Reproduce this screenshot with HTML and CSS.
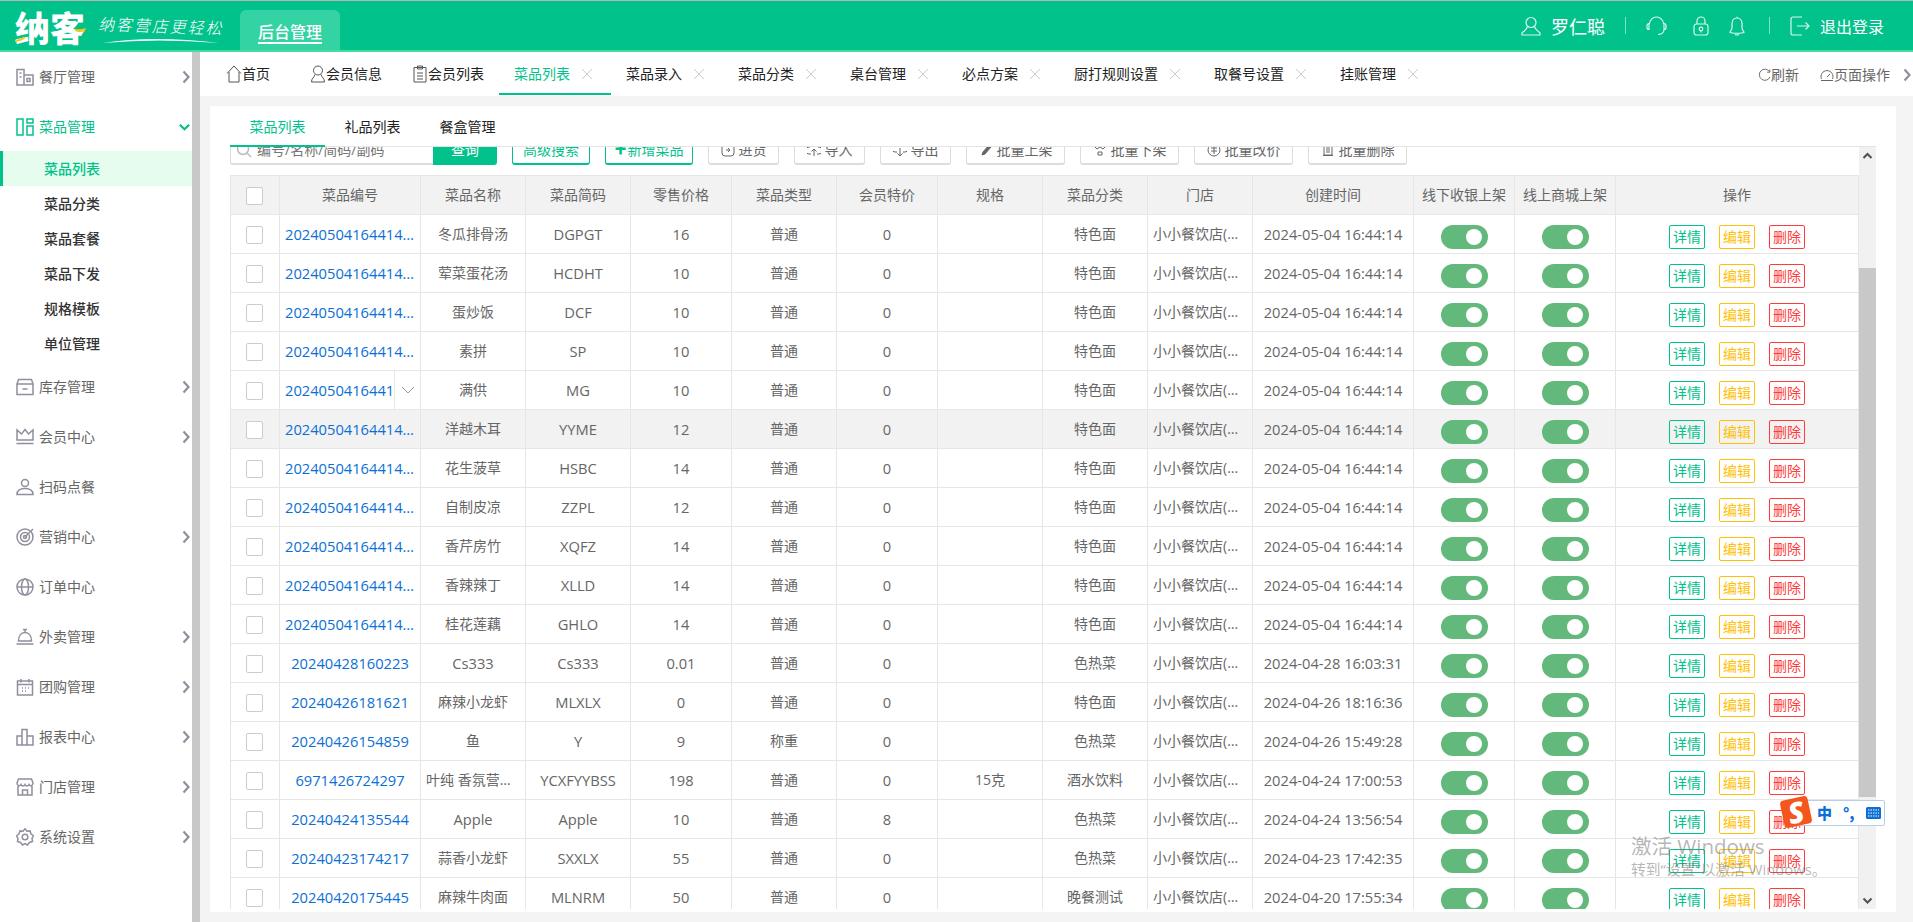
FILE: index.html
```html
<!DOCTYPE html>
<html lang="zh-CN">
<head>
<meta charset="utf-8">
<title>菜品列表</title>
<link rel="stylesheet" href="styles.css">
</head>
<body>
<svg class="defs" width="0" height="0">
  <symbol id="x" viewBox="0 0 12 12"><path d="M1 1l10 10M11 1L1 11" fill="none" stroke="currentColor" stroke-width="1"/></symbol>
  <symbol id="chev" viewBox="0 0 8 14"><path d="M1.500 1.500L6.500 7l-5 5.500" fill="none" stroke="currentColor" stroke-width="2.200"/></symbol>
</svg>
<header class="topbar">
  <div class="logo">纳客<svg class="logo-acc" viewBox="0 0 71 30"><path d="M0 26q5-.5 9-3.500l1 2q-4 3-10 3.500zM60 15q5 1 11-1l-1 3q-5 2-10 0z" fill="#f5c518"/></svg></div>
  <div class="slogan"><span>纳客营店更轻松</span><svg class="swoosh" viewBox="0 0 116 7"><path d="M0 6Q50-2 116 6Q55 1 0 6z" fill="#fff"/></svg></div>
  <div class="backend"><span>后台管理</span></div>
  <div class="top-right">
    <svg class="ti ti-user" viewBox="0 0 20 20"><circle cx="10" cy="6.500" r="5"/><path d="M6.500 10.500C5.500 14 3 15 1 17v2h18v-2c-2-2-4.500-3-5.500-6.500"/></svg>
    <span class="uname">罗仁聪</span>
    <i class="vsep vsep-a"></i>
    <svg class="ti ti-head" viewBox="0 0 21 20"><path d="M3.500 8a7 7 0 0 1 14 0M3 7.500h0a2 2 0 0 0-2 2v2a2 2 0 0 0 2 2zM18 7.500h0a2 2 0 0 1 2 2v2a2 2 0 0 1-2 2zM18 13.500c0 3-2.500 5-6 5"/></svg>
    <svg class="ti ti-lock" viewBox="0 0 16 20"><rect x="1" y="8" width="14" height="11" rx="2.500"/><path d="M4 8V5a4 4 0 0 1 8 0v3"/><circle cx="8" cy="13" r="1.800"/><path d="M8 15v1.500"/></svg>
    <svg class="ti ti-bell" viewBox="0 0 16 20"><path d="M8 2C4.500 2 3 5 3 8v4c0 2-2 3-2 4.500 2 1 12 1 14 0C15 15 13 14 13 12V8c0-3-1.500-6-5-6zM8 2V.8M6 18.500q2 1 4 0"/></svg>
    <i class="vsep vsep-b"></i>
    <svg class="ti ti-out" viewBox="0 0 20 20"><path d="M12 1H3a2 2 0 0 0-2 2v14a2 2 0 0 0 2 2h9M7 10h12M15.500 6.500L19 10l-3.500 3.500"/></svg>
    <span class="logout">退出登录</span>
  </div>
</header>
<div class="shell">
  <nav class="side">
    <div class="nav-item"><svg class="ni" viewBox="0 0 18 18"><path d="M1 17V1.500h7V17zM8 7h9v10H8zM3.500 5h2M3.500 9h2M11 10.500h3v3h-3z"/></svg><span>餐厅管理</span><svg class="nc"><use href="#chev"/></svg></div>
    <div class="nav-item on"><svg class="ni" viewBox="0 0 18 18"><path d="M1 1h6v16H1zM11 1h6v4h-6zM11 8h6v9h-6z"/></svg><span>菜品管理</span><svg class="nc-down" viewBox="0 0 12 8"><path d="M1 1.500l5 5 5-5" fill="none" stroke="currentColor" stroke-width="2.400"/></svg></div>
    <div class="sub">
      <div class="sub-item on">菜品列表</div>
      <div class="sub-item">菜品分类</div>
      <div class="sub-item">菜品套餐</div>
      <div class="sub-item">菜品下发</div>
      <div class="sub-item">规格模板</div>
      <div class="sub-item">单位管理</div>
    </div>
    <div class="nav-item"><svg class="ni" viewBox="0 0 18 18"><path d="M1 6h16v10.500H1zM2.500 1.500h13L17 6H1zM6.500 11h5"/></svg><span>库存管理</span><svg class="nc"><use href="#chev"/></svg></div>
    <div class="nav-item"><svg class="ni" viewBox="0 0 18 18"><path d="M1 2v10h16V2l-4.500 4L9 1.500 5.500 6zM.5 15.500h17"/></svg><span>会员中心</span><svg class="nc"><use href="#chev"/></svg></div>
    <div class="nav-item"><svg class="ni" viewBox="0 0 18 18"><circle cx="9" cy="5" r="3.500"/><path d="M1 16.500c0-4 3-6 8-6s8 2 8 6zM1 16.500h16"/></svg><span>扫码点餐</span></div>
    <div class="nav-item"><svg class="ni" viewBox="0 0 18 18"><circle cx="9" cy="9" r="8"/><circle cx="9" cy="9" r="4.500"/><circle cx="9" cy="9" r="1.500"/><path d="M9 9l8-8"/></svg><span>营销中心</span><svg class="nc"><use href="#chev"/></svg></div>
    <div class="nav-item"><svg class="ni" viewBox="0 0 18 18"><circle cx="9" cy="9" r="8"/><ellipse cx="9" cy="9" rx="3.500" ry="8"/><path d="M1 9h16"/></svg><span>订单中心</span></div>
    <div class="nav-item"><svg class="ni" viewBox="0 0 18 18"><path d="M9 4.500C5 4.500 2.500 8 2.500 13h13C15.500 8 13 4.500 9 4.500zM7 1.500h4M9 1.500v3M.5 16h17"/></svg><span>外卖管理</span><svg class="nc"><use href="#chev"/></svg></div>
    <div class="nav-item"><svg class="ni" viewBox="0 0 18 18"><path d="M1.500 3h15v14h-15zM5 1v3.500M13 1v3.500M1.500 6.500h15M6 10h1M9 10h1M12 10h1M6 13h1M9 13h1"/></svg><span>团购管理</span><svg class="nc"><use href="#chev"/></svg></div>
    <div class="nav-item"><svg class="ni" viewBox="0 0 18 18"><path d="M1 8h5v9H1zM6 1.500h5V17H6zM11 8h6v9h-6z"/></svg><span>报表中心</span><svg class="nc"><use href="#chev"/></svg></div>
    <div class="nav-item"><svg class="ni" viewBox="0 0 18 18"><path d="M2 8v9h14V8M1 5l1.500-4h13L17 5c0 3-3 3.500-4 1.500C12 8.500 10 8.500 9 6.500 8 8.500 6 8.500 5 6.500 4 8.500 1 8 1 5zM6.500 17v-5h5v5"/></svg><span>门店管理</span><svg class="nc"><use href="#chev"/></svg></div>
    <div class="nav-item"><svg class="ni" viewBox="0 0 18 18"><path d="M9 .8l2 2.400 3-.3 1 3 2.500 2.100L16 10.500l.5 3-3 1L11.500 17 9 15.500 6.500 17l-2-2.500-3-1 .5-3L.5 8l2.500-2.100 1-3 3 .3z"/><circle cx="9" cy="9" r="2.800"/></svg><span>系统设置</span><svg class="nc"><use href="#chev"/></svg></div>
  </nav>
  <div class="side-bar"></div>
  <main class="main">
    <div class="tabs">
      <div class="tab tab-home"><svg class="tab-ic" viewBox="0 0 16 18"><path d="M1 8.500L8 1l7 7.500M3 7v10h10V7"/></svg>首页</div>
      <div class="tab"><svg class="tab-ic" viewBox="0 0 16 18"><circle cx="8" cy="5.500" r="4.500"/><path d="M5 9.500C4 13 1.500 13 1.500 17h13C14.500 13 12 13 11 9.500"/></svg>会员信息</div>
      <div class="tab"><svg class="tab-ic" viewBox="0 0 16 18"><path d="M2 2.500h12V17H2zM5.500 1h5v3h-5zM5 8h6M5 11h6M5 14h6"/></svg>会员列表</div>
      <div class="tab on">菜品列表<svg class="tab-x"><use href="#x"/></svg></div>
      <div class="tab">菜品录入<svg class="tab-x"><use href="#x"/></svg></div>
      <div class="tab">菜品分类<svg class="tab-x"><use href="#x"/></svg></div>
      <div class="tab">桌台管理<svg class="tab-x"><use href="#x"/></svg></div>
      <div class="tab">必点方案<svg class="tab-x"><use href="#x"/></svg></div>
      <div class="tab">厨打规则设置<svg class="tab-x"><use href="#x"/></svg></div>
      <div class="tab">取餐号设置<svg class="tab-x"><use href="#x"/></svg></div>
      <div class="tab">挂账管理<svg class="tab-x"><use href="#x"/></svg></div>
      <div class="tab-tools">
        <svg class="tool-ic" viewBox="0 0 14 14"><path d="M12.500 3.500A6 6 0 1 0 13 9M12.800 1v3h-3"/></svg><span class="tool-t">刷新</span>
        <svg class="tool-ic tool-ic2" viewBox="0 0 14 14"><path d="M1.500 11A6 6 0 1 1 12.500 11M7 9l3-3M1 12.500h12"/></svg><span>页面操作</span>
        <svg class="tool-chev"><use href="#chev"/></svg>
      </div>
    </div>
    <section class="panel">
      <div class="subtabs">
        <div class="subtab on">菜品列表</div>
        <div class="subtab">礼品列表</div>
        <div class="subtab">餐盒管理</div>
      </div>
      <div class="body">
        <div class="scroller">
          <div class="toolbar">
            <div class="search"><svg class="s-ic" viewBox="0 0 16 16"><circle cx="7" cy="7" r="5.500"/><path d="M11 11l4 4"/></svg><span>编号/名称/简码/副码</span></div>
            <div class="query">查询</div>
            <div class="btn green w78">高级搜索</div>
            <div class="btn green w89"><b class="plus">✚</b>新增菜品</div>
            <div class="btn w71"><svg class="b-ic" viewBox="0 0 14 14"><path d="M1 1v9a3 3 0 0 0 3 3h6a3 3 0 0 0 3-3V1M5 7h4M7 5l2 2-2 2"/></svg>进货</div>
            <div class="btn w71"><svg class="b-ic" viewBox="0 0 14 14"><path d="M4 11H2a1.500 1.500 0 0 1 0-7h1a4 4 0 0 1 8 0h1a1.500 1.500 0 0 1 0 7h-2M7 13V6M4.500 8.500L7 6l2.500 2.500"/></svg>导入</div>
            <div class="btn w71"><svg class="b-ic" viewBox="0 0 14 14"><path d="M4 9H2a1.500 1.500 0 0 1 0-7h10a1.500 1.500 0 0 1 0 7h-2M7 5v8M4.500 10.500L7 13l2.500-2.500"/></svg>导出</div>
            <div class="btn w99"><svg class="b-ic" viewBox="0 0 14 14"><path d="M3 12l1-3 6-7 2 2-6 7z" fill="#666"/></svg>批量上架</div>
            <div class="btn w99"><svg class="b-ic" viewBox="0 0 14 14"><path d="M1 3l3 3 3-2 3 2 3-3M5 9h4v3H5z"/></svg>批量下架</div>
            <div class="btn w99"><svg class="b-ic" viewBox="0 0 14 14"><circle cx="7" cy="7" r="6"/><path d="M4 5h6M4 8h6M7 3v8"/></svg>批量改价</div>
            <div class="btn w99"><svg class="b-ic" viewBox="0 0 14 14"><path d="M3 2v10h8V2M2 12.500h10M6 3v7M8 3v7"/></svg>批量删除</div>
          </div>
          <table class="grid">
            <colgroup><col class="c1"><col class="c2"><col class="c3"><col class="c3"><col class="c4"><col class="c3"><col class="c4"><col class="c3"><col class="c3"><col class="c3"><col class="c5"><col class="c4"><col class="c4"><col class="c6"></colgroup>
            <thead><tr><th><span class="ck"></span></th><th>菜品编号</th><th>菜品名称</th><th>菜品简码</th><th>零售价格</th><th>菜品类型</th><th>会员特价</th><th>规格</th><th>菜品分类</th><th>门店</th><th>创建时间</th><th>线下收银上架</th><th>线上商城上架</th><th>操作</th></tr></thead>
            <tbody>
<tr><td><span class="ck"></span></td><td class="n id">2024050416441401</td><td>冬瓜排骨汤</td><td class="n">DGPGT</td><td class="n">16</td><td>普通</td><td class="n">0</td><td></td><td>特色面</td><td class="st">小小餐饮店(小小餐饮店)</td><td class="n">2024-05-04 16:44:14</td><td><span class="sw"></span></td><td><span class="sw"></span></td><td><div class="ops"><span class="op g">详情</span><span class="op y">编辑</span><span class="op r">删除</span></div></td></tr>
<tr><td><span class="ck"></span></td><td class="n id">2024050416441402</td><td>荤菜蛋花汤</td><td class="n">HCDHT</td><td class="n">10</td><td>普通</td><td class="n">0</td><td></td><td>特色面</td><td class="st">小小餐饮店(小小餐饮店)</td><td class="n">2024-05-04 16:44:14</td><td><span class="sw"></span></td><td><span class="sw"></span></td><td><div class="ops"><span class="op g">详情</span><span class="op y">编辑</span><span class="op r">删除</span></div></td></tr>
<tr><td><span class="ck"></span></td><td class="n id">2024050416441403</td><td>蛋炒饭</td><td class="n">DCF</td><td class="n">10</td><td>普通</td><td class="n">0</td><td></td><td>特色面</td><td class="st">小小餐饮店(小小餐饮店)</td><td class="n">2024-05-04 16:44:14</td><td><span class="sw"></span></td><td><span class="sw"></span></td><td><div class="ops"><span class="op g">详情</span><span class="op y">编辑</span><span class="op r">删除</span></div></td></tr>
<tr><td><span class="ck"></span></td><td class="n id">2024050416441404</td><td>素拼</td><td class="n">SP</td><td class="n">10</td><td>普通</td><td class="n">0</td><td></td><td>特色面</td><td class="st">小小餐饮店(小小餐饮店)</td><td class="n">2024-05-04 16:44:14</td><td><span class="sw"></span></td><td><span class="sw"></span></td><td><div class="ops"><span class="op g">详情</span><span class="op y">编辑</span><span class="op r">删除</span></div></td></tr>
<tr><td><span class="ck"></span></td><td class="n idtip"><div class="idtip-in"><span class="idtip-t">2024050416441405</span><span class="idtip-c"><svg viewBox="0 0 14 8"><path d="M1 1l6 6 6-6" fill="none" stroke="#999" stroke-width="1"/></svg></span></div></td><td>满供</td><td class="n">MG</td><td class="n">10</td><td>普通</td><td class="n">0</td><td></td><td>特色面</td><td class="st">小小餐饮店(小小餐饮店)</td><td class="n">2024-05-04 16:44:14</td><td><span class="sw"></span></td><td><span class="sw"></span></td><td><div class="ops"><span class="op g">详情</span><span class="op y">编辑</span><span class="op r">删除</span></div></td></tr>
<tr class="hover"><td><span class="ck"></span></td><td class="n id">2024050416441406</td><td>洋越木耳</td><td class="n">YYME</td><td class="n">12</td><td>普通</td><td class="n">0</td><td></td><td>特色面</td><td class="st">小小餐饮店(小小餐饮店)</td><td class="n">2024-05-04 16:44:14</td><td><span class="sw"></span></td><td><span class="sw"></span></td><td><div class="ops"><span class="op g">详情</span><span class="op y">编辑</span><span class="op r">删除</span></div></td></tr>
<tr><td><span class="ck"></span></td><td class="n id">2024050416441407</td><td>花生菠草</td><td class="n">HSBC</td><td class="n">14</td><td>普通</td><td class="n">0</td><td></td><td>特色面</td><td class="st">小小餐饮店(小小餐饮店)</td><td class="n">2024-05-04 16:44:14</td><td><span class="sw"></span></td><td><span class="sw"></span></td><td><div class="ops"><span class="op g">详情</span><span class="op y">编辑</span><span class="op r">删除</span></div></td></tr>
<tr><td><span class="ck"></span></td><td class="n id">2024050416441408</td><td>自制皮凉</td><td class="n">ZZPL</td><td class="n">12</td><td>普通</td><td class="n">0</td><td></td><td>特色面</td><td class="st">小小餐饮店(小小餐饮店)</td><td class="n">2024-05-04 16:44:14</td><td><span class="sw"></span></td><td><span class="sw"></span></td><td><div class="ops"><span class="op g">详情</span><span class="op y">编辑</span><span class="op r">删除</span></div></td></tr>
<tr><td><span class="ck"></span></td><td class="n id">2024050416441409</td><td>香芹房竹</td><td class="n">XQFZ</td><td class="n">14</td><td>普通</td><td class="n">0</td><td></td><td>特色面</td><td class="st">小小餐饮店(小小餐饮店)</td><td class="n">2024-05-04 16:44:14</td><td><span class="sw"></span></td><td><span class="sw"></span></td><td><div class="ops"><span class="op g">详情</span><span class="op y">编辑</span><span class="op r">删除</span></div></td></tr>
<tr><td><span class="ck"></span></td><td class="n id">2024050416441410</td><td>香辣辣丁</td><td class="n">XLLD</td><td class="n">14</td><td>普通</td><td class="n">0</td><td></td><td>特色面</td><td class="st">小小餐饮店(小小餐饮店)</td><td class="n">2024-05-04 16:44:14</td><td><span class="sw"></span></td><td><span class="sw"></span></td><td><div class="ops"><span class="op g">详情</span><span class="op y">编辑</span><span class="op r">删除</span></div></td></tr>
<tr><td><span class="ck"></span></td><td class="n id">2024050416441411</td><td>桂花莲藕</td><td class="n">GHLO</td><td class="n">14</td><td>普通</td><td class="n">0</td><td></td><td>特色面</td><td class="st">小小餐饮店(小小餐饮店)</td><td class="n">2024-05-04 16:44:14</td><td><span class="sw"></span></td><td><span class="sw"></span></td><td><div class="ops"><span class="op g">详情</span><span class="op y">编辑</span><span class="op r">删除</span></div></td></tr>
<tr><td><span class="ck"></span></td><td class="n id">20240428160223</td><td class="n">Cs333</td><td class="n">Cs333</td><td class="n">0.01</td><td>普通</td><td class="n">0</td><td></td><td>色热菜</td><td class="st">小小餐饮店(小小餐饮店)</td><td class="n">2024-04-28 16:03:31</td><td><span class="sw"></span></td><td><span class="sw"></span></td><td><div class="ops"><span class="op g">详情</span><span class="op y">编辑</span><span class="op r">删除</span></div></td></tr>
<tr><td><span class="ck"></span></td><td class="n id">20240426181621</td><td>麻辣小龙虾</td><td class="n">MLXLX</td><td class="n">0</td><td>普通</td><td class="n">0</td><td></td><td>特色面</td><td class="st">小小餐饮店(小小餐饮店)</td><td class="n">2024-04-26 18:16:36</td><td><span class="sw"></span></td><td><span class="sw"></span></td><td><div class="ops"><span class="op g">详情</span><span class="op y">编辑</span><span class="op r">删除</span></div></td></tr>
<tr><td><span class="ck"></span></td><td class="n id">20240426154859</td><td>鱼</td><td class="n">Y</td><td class="n">9</td><td>称重</td><td class="n">0</td><td></td><td>色热菜</td><td class="st">小小餐饮店(小小餐饮店)</td><td class="n">2024-04-26 15:49:28</td><td><span class="sw"></span></td><td><span class="sw"></span></td><td><div class="ops"><span class="op g">详情</span><span class="op y">编辑</span><span class="op r">删除</span></div></td></tr>
<tr><td><span class="ck"></span></td><td class="n id">6971426724297</td><td class="cut">叶纯 香氛营养补水瓶</td><td class="n">YCXFYYBSS</td><td class="n">198</td><td>普通</td><td class="n">0</td><td>15克</td><td>酒水饮料</td><td class="st">小小餐饮店(小小餐饮店)</td><td class="n">2024-04-24 17:00:53</td><td><span class="sw"></span></td><td><span class="sw"></span></td><td><div class="ops"><span class="op g">详情</span><span class="op y">编辑</span><span class="op r">删除</span></div></td></tr>
<tr><td><span class="ck"></span></td><td class="n id">20240424135544</td><td class="n">Apple</td><td class="n">Apple</td><td class="n">10</td><td>普通</td><td class="n">8</td><td></td><td>色热菜</td><td class="st">小小餐饮店(小小餐饮店)</td><td class="n">2024-04-24 13:56:54</td><td><span class="sw"></span></td><td><span class="sw"></span></td><td><div class="ops"><span class="op g">详情</span><span class="op y">编辑</span><span class="op r">删除</span></div></td></tr>
<tr><td><span class="ck"></span></td><td class="n id">20240423174217</td><td>蒜香小龙虾</td><td class="n">SXXLX</td><td class="n">55</td><td>普通</td><td class="n">0</td><td></td><td>色热菜</td><td class="st">小小餐饮店(小小餐饮店)</td><td class="n">2024-04-23 17:42:35</td><td><span class="sw"></span></td><td><span class="sw"></span></td><td><div class="ops"><span class="op g">详情</span><span class="op y">编辑</span><span class="op r">删除</span></div></td></tr>
<tr><td><span class="ck"></span></td><td class="n id">20240420175445</td><td>麻辣牛肉面</td><td class="n">MLNRM</td><td class="n">50</td><td>普通</td><td class="n">0</td><td></td><td>晚餐测试</td><td class="st">小小餐饮店(小小餐饮店)</td><td class="n">2024-04-20 17:55:34</td><td><span class="sw"></span></td><td><span class="sw"></span></td><td><div class="ops"><span class="op g">详情</span><span class="op y">编辑</span><span class="op r">删除</span></div></td></tr>
            </tbody>
          </table>
        </div>
        <div class="vbar">
          <svg class="vbar-a" viewBox="0 0 17 17"><path d="M4.500 11l4-4 4 4" fill="none" stroke="#505050" stroke-width="2"/></svg>
          <div class="vbar-thumb"></div>
          <svg class="vbar-a vbar-down" viewBox="0 0 17 17"><path d="M4.500 6.500l4 4 4-4" fill="none" stroke="#505050" stroke-width="2"/></svg>
        </div>
      </div>
    </section>
  </main>
</div>
<div class="ime">
  <div class="ime-s">S</div>
  <div class="ime-bar"><b>中</b><b class="ime-p">°,</b><svg class="ime-k" viewBox="0 0 15 12"><rect width="15" height="12" rx="1.500" fill="#0b6fd6"/><path d="M2 3h11M2 6h11M2 9h11" stroke="#fff" stroke-width="1" stroke-dasharray="1.500 1"/></svg></div>
</div>
<div class="activate"><div class="act-a">激活 Windows</div><div class="act-b">转到“设置”以激活 Windows。</div></div>
</body>
</html>
```
FILE: styles.css
```css
* { box-sizing: border-box; }
html, body { margin: 0; height: 100%; }
body {
  width: 1913px; height: 922px; overflow: hidden; position: relative;
  font: 14px/20px "Open Sans", "Noto Sans CJK SC", sans-serif;
  color: #666; background: #f4f4f4;
}
.defs { position: absolute; }

/* top bar */
.topbar {
  height: 52px; display: flex; align-items: center; background: #02c28c;
  border-top: 1px solid #b5b5b5; border-bottom: 2px solid #45dc9c; padding-left: 15px; color: #fff;
}
.logo {
  width: 71px; height: 32px; position: relative; font: 900 35px/30px "Noto Sans CJK SC", sans-serif;
  white-space: nowrap; margin-top: 4px; color: #fff;
}
.logo-acc { position: absolute; left: 0; top: 2px; width: 71px; height: 30px; }
.slogan { width: 125px; margin: 12px 0 0 14px; height: 32px; align-self: flex-start; font: 300 16px/20px "Noto Sans CJK SC", sans-serif; white-space: nowrap; }
.slogan span { display: block; letter-spacing: 2px; transform: skewX(-12deg) rotate(2deg); transform-origin: left; }
.swoosh { display: block; width: 116px; height: 7px; margin: 4px 0 0 3px; }
.backend {
  width: 100px; height: 40px; margin: 0 0 0 15px; align-self: flex-end; background: #33d3a4;
  border-radius: 6px 6px 0 0; display: flex; justify-content: center; padding-top: 10px;
  font: 500 16px/22px "Noto Sans CJK SC", sans-serif; color: #fff;
}
.backend span { height: 24px; border-bottom: 2px solid #fff; }
.top-right { margin-left: auto; padding-right: 29px; display: flex; align-items: center; }
.ti { fill: none; stroke: #d6f7ea; stroke-width: 1.200; display: block; }
.ti-user { width: 20px; height: 20px; }
.uname { font: 18px/24px "Noto Sans CJK SC", sans-serif; margin-left: 10px; }
.vsep { width: 1px; height: 17px; background: #7fe3c2; }
.vsep-a { margin: 0 20px; }
.vsep-b { margin: 0 20px 0 24px; }
.ti-head { width: 21px; height: 20px; margin-right: 26px; }
.ti-lock { width: 16px; height: 20px; margin-right: 20px; }
.ti-bell { width: 16px; height: 20px; }
.ti-out { width: 20px; height: 20px; }
.logout { font: 16px/22px "Noto Sans CJK SC", sans-serif; margin-left: 10px; }

.shell { display: flex; height: 870px; }

/* side menu */
.side { width: 192px; background: #fff; flex: none; overflow: hidden; }
.side-bar { width: 8px; background: #c8c8c8; flex: none; }
.nav-item { height: 50px; display: flex; align-items: center; padding-left: 16px; color: #666; position: relative; }
.nav-item.on { color: #02c28c; }
.ni { width: 18px; height: 18px; flex: none; fill: none; stroke: #8f8f9e; stroke-width: 1.500; margin-right: 5px; }
.nav-item.on .ni { stroke: #02c28c; }
.nc { position: absolute; left: 182px; top: 18px; width: 8px; height: 14px; color: #8f8f9e; }
.nc-down { position: absolute; left: 179px; top: 21px; width: 11px; height: 8px; color: #02c28c; }
.sub { margin: -1px 0 1px; }
.sub-item { height: 35px; padding-left: 44px; line-height: 35px; font-weight: 500; color: #333; }
.sub-item.on { background: #e6fcef; color: #02c28c; border-left: 3px solid #02c28c; padding-left: 41px; }

/* main */
.main { flex: 1; min-width: 0; display: flex; flex-direction: column; }
.tabs { height: 44px; background: #fff; display: flex; padding-left: 11px; flex: none; color: #222; }
.tab { height: 43px; padding: 3px 15px 0; display: flex; align-items: center; white-space: nowrap; border-bottom: 2px solid transparent; color: #222; }
.tab.on { color: #02c28c; border-bottom-color: #02c28c; padding-right: 18px; }
.tab:has(.tab-x) { padding-right: 18px; }
.tab-home { margin-right: 10px; }
.tab-ic { width: 16px; height: 18px; fill: none; stroke: #555; stroke-width: 1; }
.tab-x { width: 12px; height: 12px; margin-left: 11px; color: #ccc; }
.tab-tools { margin-left: auto; display: flex; align-items: center; padding: 3px 2px 2px 0; color: #666; }
.tool-ic { width: 13px; height: 14px; fill: none; stroke: #666; stroke-width: 1; }
.tool-ic2 { margin-left: 21px; width: 14px; }
.tool-chev { width: 8px; height: 14px; margin-left: 13px; color: #8f8f9e; }

.panel { flex: 1; min-height: 0; margin: 10px 17px 10px 10px; background: #fff; padding: 0 20px 3px; display: flex; flex-direction: column; }
.subtabs { height: 41px; display: flex; flex: none; border-bottom: 1px solid #e4e4e4; position: relative; }
.subtab { width: 95px; height: 41px; line-height: 41px; text-align: center; color: #222; }
.subtab.on { color: #02c28c; border-bottom: 2px solid #02c28c; }
.body { flex: 1; min-height: 0; display: flex; }
.scroller { flex: 1; min-width: 0; overflow: hidden; }

/* clipped toolbar */
.toolbar { height: 30px; margin-top: -12px; display: flex; gap: 15px; }
.search { width: 203px; border: 1px solid #ddd; border-radius: 3px 0 0 3px; display: flex; align-items: center; padding-left: 5px; color: #777; margin-right: -15px; border-bottom-width: 2px; border-right: 0; }
.s-ic { width: 16px; height: 16px; fill: none; stroke: #bbb; stroke-width: 1.500; margin-right: 5px; }
.query { width: 64px; background: #02c28c; color: #fff; text-align: center; line-height: 30px; border-radius: 0 3px 3px 0; }
.btn { height: 30px; border: 1px solid #ddd; border-bottom-width: 2px; border-radius: 3px; display: flex; align-items: center; justify-content: center; color: #666; background: #fff; }
.btn.green { border-color: #02c28c; color: #02c28c; }
.w78 { width: 78px; }
.w89 { width: 88px; }
.w71 { width: 71px; }
.w99 { width: 99px; }
.plus { font-size: 12px; margin-right: 1px; }
.b-ic { width: 14px; height: 14px; margin-right: 4px; fill: none; stroke: #666; stroke-width: 1; }

/* table */
.grid { width: 1628px; margin-top: 10px; table-layout: fixed; border-collapse: collapse; }
.c1 { width: 49px; }
.c2 { width: 141px; }
.c3 { width: 105px; }
.c4 { width: 101px; }
.c5 { width: 161px; }
.c6 { width: 243px; }
.grid th, .grid td {
  height: 39px; padding: 0 5px; border: 1px solid #e6e6e6; text-align: center; font-weight: 400;
  white-space: nowrap; overflow: hidden; text-overflow: ellipsis; color: #666;
}
.grid th { background: #f2f2f2; }
.grid td.n { font-size: 14.700px; }
.grid td.id { color: #0a6fd6; }
.grid td.idtip { padding: 0; color: #0a6fd6; }
.idtip-in { display: flex; height: 38px; align-items: center; }
.idtip-t { width: 114px; padding-left: 5px; overflow: hidden; flex: none; }
.idtip-c { flex: none; width: 26px; height: 38px; border-left: 1px solid #e6e6e6; display: flex; align-items: center; justify-content: center; }
.idtip-c svg { width: 14px; height: 8px; }
.grid tr.hover td { background: #f2f2f2; }
.ck { display: inline-block; width: 17px; height: 18px; background: #fff; border: 1px solid #ccc; border-radius: 2px; vertical-align: middle; margin: 1px 1px 0 0; }
.sw { display: inline-flex; width: 47px; height: 24px; background: #62b97b; border-radius: 12px; align-items: center; justify-content: flex-end; padding-right: 6px; vertical-align: middle; margin-top: 5px; }
.sw::after { content: ""; width: 16px; height: 16px; border-radius: 50%; background: #fff; }
.ops { display: flex; justify-content: center; gap: 14px; margin-top: 5px; }
.op { width: 36px; height: 24px; line-height: 22px; border: 1px solid; border-radius: 2px; font-size: 14px; background: #fff; text-align: center; }
.op.g { color: #02c28c; }
.op.y { color: #ffc107; }
.op.r { color: #ff3b3b; }
.grid tr.hover .op { background: transparent; }

/* scrollbar */
.vbar { width: 17px; flex: none; background: #f1f1f1; display: flex; flex-direction: column; }
.vbar-a { width: 17px; height: 17px; flex: none; }
.vbar-thumb { height: 529px; margin-top: 104px; background: #c8c8c8; }
.vbar-down { margin-top: auto; }

/* overlays */
.ime { position: absolute; left: 1781px; top: 796px; width: 104px; height: 36px; }
.ime-bar { position: absolute; left: 16px; top: 4px; width: 88px; height: 26px; background: #fff; border: 1px solid #b8cfe8; border-radius: 2px; display: flex; align-items: center; padding-left: 19px; color: #0b6fd6; font: 700 15px/20px "Noto Sans CJK SC", sans-serif; }
.ime-p { margin-left: 11px; }
.ime-k { width: 15px; height: 12px; margin-left: 11px; }
.ime-s { position: absolute; left: 1px; top: 2px; z-index: 1; width: 28px; height: 28px; border-radius: 4px; background: #f4561e; color: #fff; transform: rotate(-12deg); font: italic 800 29px/27px "Open Sans", sans-serif; text-align: center; }
.activate { position: absolute; left: 1631px; top: 834px; color: rgba(110, 110, 110, .5); white-space: nowrap; pointer-events: none; }
.act-a { font-size: 20.500px; line-height: 24px; }
.act-b { font-size: 14.800px; line-height: 20px; margin-top: 1px; }
```
